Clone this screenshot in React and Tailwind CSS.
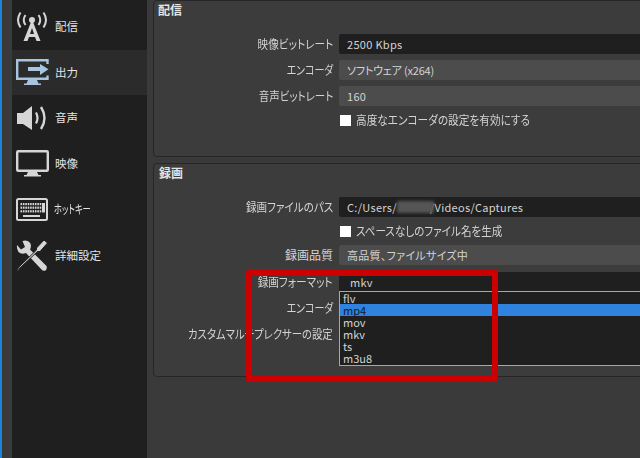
const font = { fontFamily: '"Noto Sans CJK JP", "Liberation Sans", sans-serif' };

function Antenna() {
  return (
    <svg width="34" height="32" viewBox="0 0 34 32" fill="none" stroke="#d6d6d6">
      <circle cx="17" cy="9" r="3" fill="#d6d6d6" stroke="none" />
      <path d="M16 11 L8.5 30 H12.5 L14 26 H20 L21.5 30 H25.5 L18 11 Z M15 23 L17 17 L19 23 Z" fill="#d6d6d6" stroke="none" fillRule="evenodd" />
      <path d="M10.5 4 Q7 9 10.5 14" strokeWidth="2" />
      <path d="M23.5 4 Q27 9 23.5 14" strokeWidth="2" />
      <path d="M5.5 1.5 Q0.5 9 5.5 16.5" strokeWidth="2" />
      <path d="M28.5 1.5 Q33.5 9 28.5 16.5" strokeWidth="2" />
    </svg>
  );
}

function Output() {
  return (
    <svg width="33" height="27" viewBox="0 0 33 27" fill="none">
      <path d="M31.5 5 V1.2 H1.2 V19.8 H31.5 V16.5" stroke="#a8c4e0" strokeWidth="2.4" />
      <path d="M12 21 H21 L22.5 24.5 H25 V26 H8 V24.5 H10.5 Z" fill="#a8c4e0" />
      <path d="M12 8 H24 V5 L32.5 10.2 L24 16 V12 H12 Z" fill="#a8c4e0" />
    </svg>
  );
}

function Speaker() {
  return (
    <svg width="32" height="26" viewBox="0 0 32 26" fill="none" stroke="#d6d6d6">
      <path d="M1 8 H7 L16 1 V25 L7 19 H1 Z" fill="#d6d6d6" stroke="none" />
      <path d="M20 7.5 Q23 13 20 18.5" strokeWidth="2.2" />
      <path d="M25 2 Q32 13 25 24" strokeWidth="2.4" />
    </svg>
  );
}

function Monitor() {
  return (
    <svg width="33" height="27" viewBox="0 0 33 27" fill="none">
      <rect x="1.2" y="1.2" width="30.6" height="19.6" rx="1" stroke="#d6d6d6" strokeWidth="2.4" />
      <path d="M12 22 H21 L22.5 25 H25 V26.5 H8 V25 H10.5 Z" fill="#d6d6d6" />
    </svg>
  );
}

function Keyboard() {
  const keys = [];
  for (let r = 0; r < 3; r++) {
    for (let c = 0; c < 9; c++) {
      keys.push(<rect key={`${r}-${c}`} x={4.5 + c * 2.4} y={5 + r * 3.6} width="1.6" height="2.2" fill="#d6d6d6" />);
    }
  }
  return (
    <svg width="32" height="23" viewBox="0 0 32 23" fill="none">
      <rect x="1" y="1" width="30" height="21" rx="1.5" stroke="#d6d6d6" strokeWidth="2" />
      {keys}
      <rect x="26" y="5" width="3" height="9.5" fill="#d6d6d6" />
      <rect x="7" y="17" width="17" height="2" fill="#d6d6d6" />
    </svg>
  );
}

function Tools() {
  return (
    <svg width="32" height="33" viewBox="0 0 32 33" fill="none">
      <path d="M1 6 L5 10.5 L9 8 L6.5 2 Q12 0.5 14.5 4.5 Q15.5 8 14 10.5 L30.5 27 Q31.5 30 29.5 31.5 Q27 32.5 25.5 30.5 L10 14 Q5.5 16 2.5 13 Q0.5 10 1 6 Z" fill="#d6d6d6" />
      <path d="M20.5 9 L28 1 L31.5 4 L24 12.5 L21.5 12.5 L5 28 L1.5 32 L0.8 31.2 L4 27 L20.5 11 Z" fill="#d6d6d6" stroke="#1f1f1f" strokeWidth="1" />
    </svg>
  );
}

const navItems = [
  { label: '配信', icon: <Antenna /> },
  { label: '出力', icon: <Output />, active: true },
  { label: '音声', icon: <Speaker /> },
  { label: '映像', icon: <Monitor /> },
  { label: 'ホットキー', icon: <Keyboard />, textClass: 'inline-block origin-left scale-x-[0.72] scale-y-[1.08] -ml-[1px]' },
  { label: '詳細設定', icon: <Tools /> },
];

function NavItem({ label, icon, active, textClass = '' }) {
  return (
    <div className={`flex h-[45.7px] items-center ${active ? 'bg-[#2b2b2b]' : ''}`}>
      <div className="flex w-[43px] shrink-0 justify-center pr-[3px]">{icon}</div>
      <span className={`text-[11.5px] leading-none whitespace-nowrap text-[#e4e4e4] [font-feature-settings:'palt'] ${textClass}`}>{label}</span>
    </div>
  );
}

function Label({ fit = '', children }) {
  return (
    <div className="flex items-center justify-end text-[12px] leading-none whitespace-nowrap text-[#d4d4d4] [font-feature-settings:'palt']">
      <span className={`inline-block origin-right ${fit}`}>{children}</span>
    </div>
  );
}

function Field({ dark, children }) {
  return (
    <div className={`flex h-[20px] items-center rounded-[2px] pl-[8px] text-[11px] leading-none tracking-[0.3px] text-[#d4d4d4] [font-feature-settings:'palt'] ${dark ? 'bg-[#1f1f1f]' : 'bg-[#4c4c4c]'}`}>
      {children}
    </div>
  );
}

function Check({ fit = '', children, down = '' }) {
  return (
    <>
      <div />
      <div className={`flex h-[14px] items-center gap-[5px] pl-[1px] text-[12px] leading-none whitespace-nowrap text-[#d4d4d4] [font-feature-settings:'palt'] ${down}`}>
        <span className="h-[11px] w-[11px] shrink-0 bg-white" />
        <span className={`inline-block origin-left ${fit}`}>{children}</span>
      </div>
    </>
  );
}

const formats = ['flv', 'mp4', 'mov', 'mkv', 'ts', 'm3u8'];

export default function App() {
  return (
    <div className="relative flex h-[458px] w-[640px] overflow-hidden bg-[#3a3a3a]" style={font}>
      <div className="w-[1.5px] shrink-0 bg-[#1a84e0]" />
      <div className="w-[10.5px] shrink-0" />
      <nav className="w-[135px] shrink-0 bg-[#1f1f1f] pt-[4px]">
        {navItems.map((item) => (
          <NavItem key={item.label} {...item} />
        ))}
      </nav>
      <main className="flex w-[520px] shrink-0 flex-col pl-[6px]">
        <section className="h-[157px] w-[520px] shrink-0 rounded-[4px] border border-[#262626] bg-[#3c3c3c] pl-[1px]">
          <h2 className="mt-[1px] h-[32px] pl-[3px] text-[12px] leading-[15px] font-bold text-[#e4e4e4]">配信</h2>
          <div className="grid grid-cols-[178px_1fr] gap-x-[6px] gap-y-[6px]">
            <Label fit="scale-x-[0.888]">映像ビットレート</Label>
            <Field dark>2500 Kbps</Field>
            <Label fit="scale-x-[0.83]">エンコーダ</Label>
            <Field>
              <span className="tracking-[-0.2px]">ソフトウェア (x264)</span>
            </Field>
            <Label fit="scale-x-[0.875]">音声ビットレート</Label>
            <Field>160</Field>
            <Check fit="scale-x-[0.888]" down="mt-[1px]">高度なエンコーダの設定を有効にする</Check>
          </div>
        </section>
        <section className="mt-[6px] h-[214px] w-[520px] shrink-0 rounded-[4px] border border-[#262626] bg-[#3c3c3c] pl-[1px]">
          <h2 className="h-[33px] pt-[1px] pl-[4px] text-[12px] leading-[15px] font-bold text-[#e4e4e4]">録画</h2>
          <div className="grid grid-cols-[178px_1fr] gap-x-[6px] gap-y-[7px]">
            <Label fit="scale-x-[0.88]">録画ファイルのパス</Label>
            <Field dark>
              C:/Users/
              <span className="relative -mr-[4px] h-[12px] w-[37px] bg-[#555555] blur-[1.5px]" />
              /Videos/Captures
            </Field>
            <Check fit="scale-x-[0.88]">スペースなしのファイル名を生成</Check>
            <Label>録画品質</Label>
            <Field>高品質、ファイルサイズ中</Field>
            <Label fit="scale-x-[0.886]">録画フォーマット</Label>
            <Field dark>
              <span className="pl-[3px]">mkv</span>
            </Field>
          </div>
          <div className="mt-[6px] grid grid-cols-[178px_1fr] gap-x-[6px] gap-y-[6px]">
            <div className="col-start-1 flex h-[20px] justify-end">
              <Label fit="scale-x-[0.83]">エンコーダ</Label>
            </div>
            <div />
            <div className="col-start-1 flex h-[20px] justify-end">
              <Label fit="scale-x-[0.863]">カスタムマルチプレクサーの設定</Label>
            </div>
          </div>
        </section>
      </main>

      <ul className="absolute top-[291px] left-[339px] h-[75px] w-[302px] border border-[#a8a8a8] bg-[#1f1f1f] text-[11px] leading-[12px]">
        {formats.map((f) => (
          <li key={f} className={`h-[12px] pl-[3px] ${f === 'mp4' ? 'bg-[#2f83df] text-[#0e1a2a]' : 'text-[#d4d4d4]'}`}>
            {f}
          </li>
        ))}
      </ul>

      <div className="pointer-events-none absolute top-[270px] left-[246px] h-[112px] w-[252px] rounded-[2px] border-[6px] border-[#cc0000]" />
    </div>
  );
}
